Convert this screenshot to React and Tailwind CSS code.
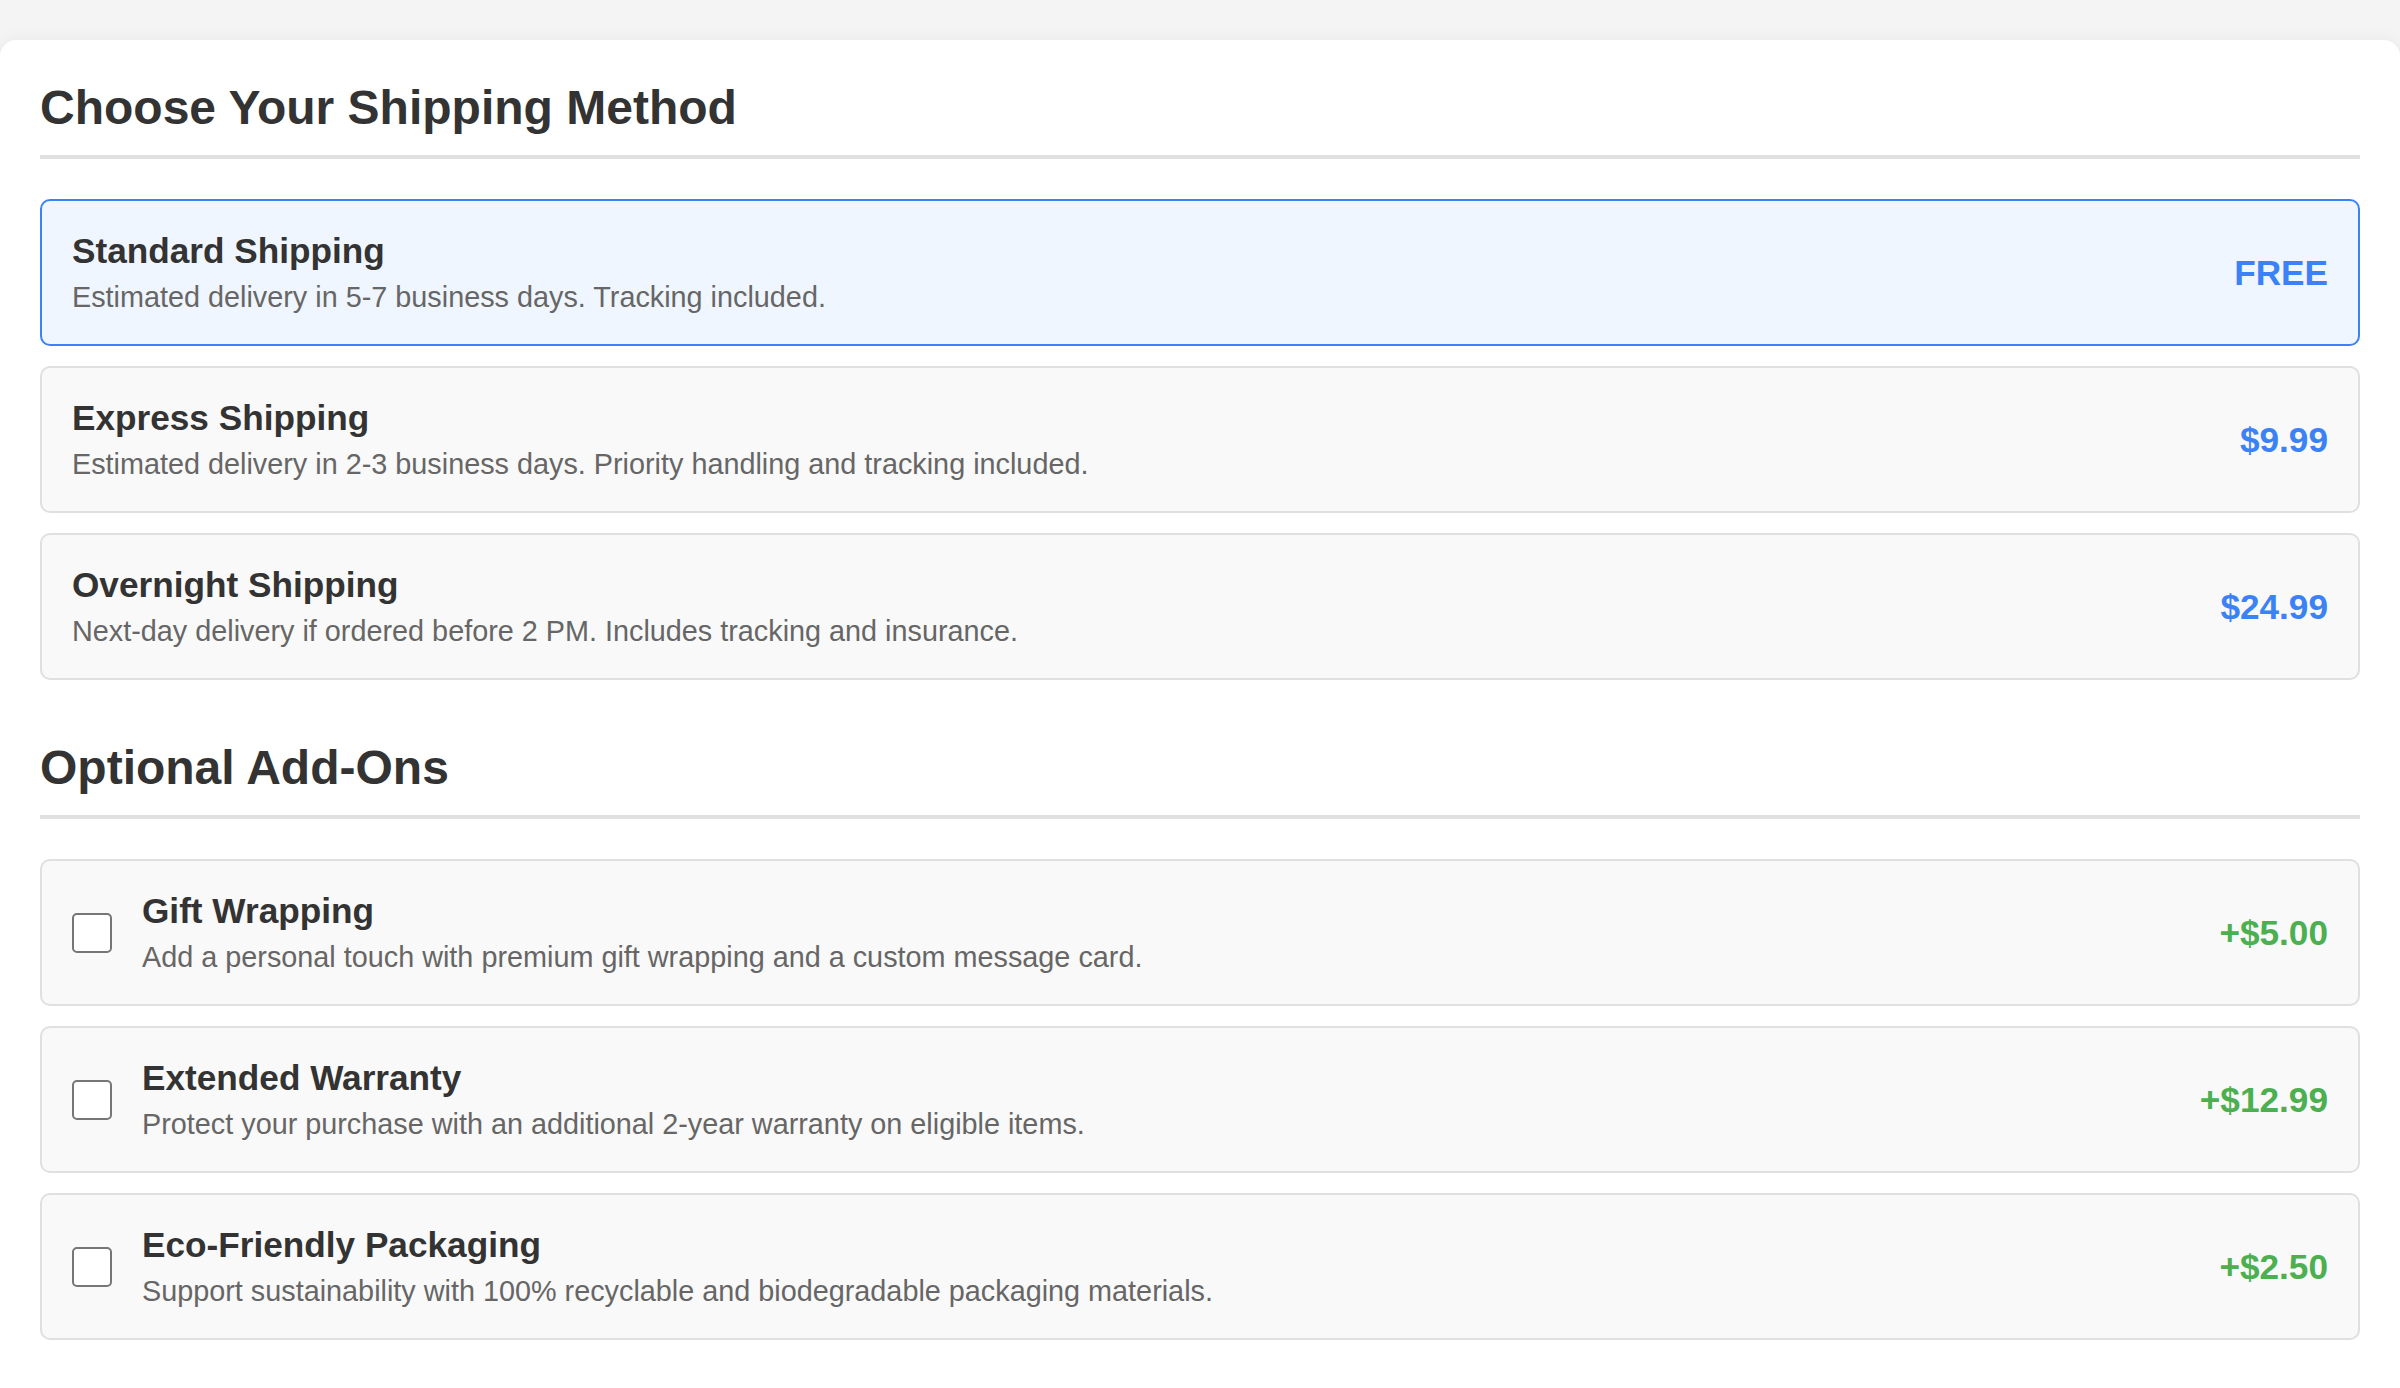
import React from "react";

const shipping = [
  { title: "Standard Shipping", desc: "Estimated delivery in 5-7 business days. Tracking included.", price: "FREE", selected: true },
  { title: "Express Shipping", desc: "Estimated delivery in 2-3 business days. Priority handling and tracking included.", price: "$9.99" },
  { title: "Overnight Shipping", desc: "Next-day delivery if ordered before 2 PM. Includes tracking and insurance.", price: "$24.99" },
];

const addons = [
  { title: "Gift Wrapping", desc: "Add a personal touch with premium gift wrapping and a custom message card.", price: "+$5.00" },
  { title: "Extended Warranty", desc: "Protect your purchase with an additional 2-year warranty on eligible items.", price: "+$12.99" },
  { title: "Eco-Friendly Packaging", desc: "Support sustainability with 100% recyclable and biodegradable packaging materials.", price: "+$2.50" },
];

function Heading({ children }) {
  return (
    <h2 className="text-[48px] font-bold text-[#333] leading-[normal] pb-[20px] border-b-4 border-[#e0e0e0] mb-[40px]">
      {children}
    </h2>
  );
}

function Info({ title, desc }) {
  return (
    <div className="flex flex-col">
      <div className="text-[35.2px] font-bold text-[#333] leading-[normal] mb-[10px]">{title}</div>
      <div className="text-[28.8px] text-[#666] leading-[normal]">{desc}</div>
    </div>
  );
}

export default function App() {
  return (
    <div className="min-h-screen bg-[#f4f4f4] pt-[40px] font-['Liberation_Sans',Arial,Helvetica,sans-serif]">
      <div className="bg-white rounded-[16px] shadow-[0_4px_20px_rgba(0,0,0,0.08)] p-[40px]">
        <section className="mb-[60px]">
          <Heading>Choose Your Shipping Method</Heading>
          {shipping.map((s) => (
            <div
              key={s.title}
              className={
                s.selected
                  ? "flex items-center justify-between rounded-[10px] border-2 border-[#3b82f6] bg-[#eff6ff] p-[30px] mb-[20px]"
                  : "flex items-center justify-between rounded-[10px] border-2 border-[#e0e0e0] bg-[#f9f9f9] p-[30px] mb-[20px]"
              }
            >
              <Info title={s.title} desc={s.desc} />
              <div className="text-[35.2px] font-bold text-[#3b82f6] leading-[normal]">{s.price}</div>
            </div>
          ))}
        </section>
        <section className="mb-[40px]">
          <Heading>Optional Add-Ons</Heading>
          {addons.map((a) => (
            <div
              key={a.title}
              className="flex items-center justify-between rounded-[10px] border-2 border-[#e0e0e0] bg-[#f9f9f9] p-[30px] mb-[20px]"
            >
              <div className="flex items-center gap-[30px]">
                <div className="w-[40px] h-[40px] shrink-0 rounded-[5px] border-2 border-[#767676] bg-white" />
                <Info title={a.title} desc={a.desc} />
              </div>
              <div className="text-[35.2px] font-bold text-[#4caf50] leading-[normal]">{a.price}</div>
            </div>
          ))}
        </section>
      </div>
    </div>
  );
}
